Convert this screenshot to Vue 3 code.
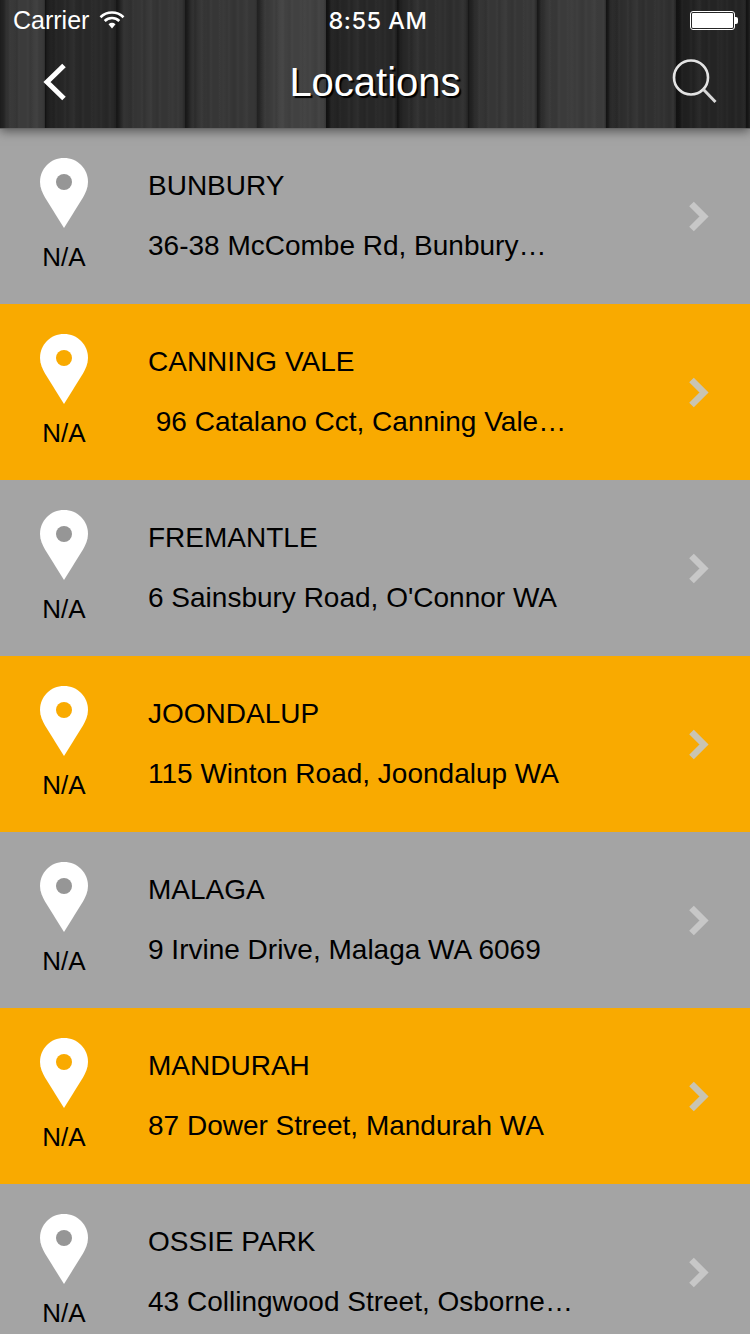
<script setup>
const planks = [
  { w: 45, c: '#3b3b3b', o: 3 }, { w: 71, c: '#282828', o: 11 }, { w: 69, c: '#353535', o: 5 }, { w: 72, c: '#363636', o: 23 },
  { w: 69, c: '#414141', o: 14 }, { w: 71, c: '#272727', o: 8 }, { w: 71, c: '#2e2e2e', o: 19 }, { w: 69, c: '#363636', o: 2 },
  { w: 69, c: '#3b3b3b', o: 27 }, { w: 70, c: '#303030', o: 9 }, { w: 70, c: '#242424', o: 16 }, { w: 4, c: '#2c2c2c', o: 0 },
]
const rows = [
  { name: 'BUNBURY', addr: '36-38 McCombe Rd, Bunbury…' },
  { name: 'CANNING VALE', addr: '\u00a096 Catalano Cct, Canning Vale…' },
  { name: 'FREMANTLE', addr: "6 Sainsbury Road, O'Connor WA" },
  { name: 'JOONDALUP', addr: '115 Winton Road, Joondalup WA' },
  { name: 'MALAGA', addr: '9 Irvine Drive, Malaga WA 6069' },
  { name: 'MANDURAH', addr: '87 Dower Street, Mandurah WA' },
  { name: 'OSSIE PARK', addr: '43 Collingwood Street, Osborne…' },
]
</script>

<template>
  <div class="page">
    <header class="header">
      <div class="wood">
        <div v-for="(p, i) in planks" :key="i" class="plank" :style="{ width: p.w + 'px', backgroundColor: p.c }">
          <div class="grain" :style="{ marginLeft: -p.o + 'px' }"></div>
        </div>
      </div>
      <div class="status">
        <div class="status-left">
          <span>Carrier</span>
          <svg width="26" height="20" viewBox="0 0 26 20">
            <path d="M1.5 7.2 A16.5 16.5 0 0 1 24.5 7.2" fill="none" stroke="#fff" stroke-width="2.6"/>
            <path d="M5.7 11 A10.5 10.5 0 0 1 20.3 11" fill="none" stroke="#fff" stroke-width="2.6"/>
            <path d="M9.5 14.2 A5.6 5.6 0 0 1 16.5 14.2 L13 18.5 Z" fill="#fff"/>
          </svg>
        </div>
        <div class="status-time">8:55 AM</div>
        <div class="battery">
          <div class="battery-body"><div class="battery-fill"></div></div>
          <div class="battery-tip"></div>
        </div>
      </div>
      <div class="nav">
        <svg class="back" width="28" height="40" viewBox="0 0 28 40">
          <path d="M24 3.5 L7 20 L24 36.5" fill="none" stroke="#fff" stroke-width="5"/>
        </svg>
        <div class="title">Locations</div>
        <svg class="search" width="46" height="46" viewBox="0 0 46 46">
          <circle cx="19" cy="18.5" r="17" fill="none" stroke="#e4e4e4" stroke-width="2.6"/>
          <path d="M31 30 L43.5 43" fill="none" stroke="#d8d8d8" stroke-width="3"/>
        </svg>
      </div>
    </header>
    <main class="list">
      <div v-for="(r, i) in rows" :key="r.name" class="row" :class="{ alt: i % 2 === 1 }">
        <div class="pin-col">
          <svg class="pin" width="48" height="70" viewBox="0 0 48 70">
            <path fill-rule="evenodd" d="M24 0 C37.5 0 48 10.5 48 24 C48 30 45.5 35 43 39.5 L24 70 L5 39.5 C2.5 35 0 30 0 24 C0 10.5 10.5 0 24 0 Z" fill="#fff"/>
            <circle class="dot" cx="24" cy="24" r="8"/>
          </svg>
          <div class="na">N/A</div>
        </div>
        <div class="info">
          <div class="name">{{ r.name }}</div>
          <div class="addr">{{ r.addr }}</div>
        </div>
        <svg class="chev" width="22" height="32" viewBox="0 0 22 32">
          <path d="M3.5 3 L16 15.5 L3.5 28" fill="none" stroke-width="6.5"/>
        </svg>
      </div>
    </main>
  </div>
</template>

<style>
html, body { margin: 0; padding: 0; background: #a4a4a4; }
</style>

<style scoped>
.page {
  width: 750px;
  height: 1334px;
  overflow: hidden;
  font-family: "Liberation Sans", Arial, sans-serif;
  display: flex;
  flex-direction: column;
}
.header {
  position: relative;
  z-index: 2;
  height: 128px;
  flex: none;
  box-shadow: 0 3px 10px rgba(0, 0, 0, 0.5);
  color: #fff;
}
.wood {
  position: absolute;
  inset: 0 0 -1px;
  display: flex;
  overflow: hidden;
  border-bottom: 1px solid #666;
  box-sizing: border-box;
}
.plank {
  position: relative;
  height: 100%;
  flex: none;
  overflow: hidden;
  background-image:
    linear-gradient(90deg, rgba(0,0,0,0.6) 0, rgba(0,0,0,0.5) 2px, rgba(0,0,0,0.18) 6px, rgba(0,0,0,0) 22px, rgba(0,0,0,0) 96%, rgba(0,0,0,0.25) 100%);
}
.grain {
  position: absolute;
  top: 0;
  bottom: 0;
  left: 0;
  width: 110px;
  background-image:
    repeating-linear-gradient(90deg, rgba(255,255,255,0) 0 2px, rgba(255,255,255,0.025) 4px, rgba(255,255,255,0) 6px 9px),
    repeating-linear-gradient(90deg, rgba(0,0,0,0) 0 5px, rgba(0,0,0,0.05) 7px, rgba(0,0,0,0) 10px 13px),
    repeating-linear-gradient(90deg, rgba(255,255,255,0) 0 11px, rgba(255,255,255,0.025) 15px, rgba(255,255,255,0) 19px 23px);
}
.status {
  position: relative;
  height: 40px;
  display: grid;
  grid-template-columns: 1fr auto 1fr;
  align-items: center;
  padding: 0 13px;
  font-size: 25px;
}
.status-left {
  display: flex;
  align-items: center;
  gap: 10px;
}
.status-time {
  font-family: Inter, "Liberation Sans", sans-serif;
  font-size: 23.5px;
  font-weight: 500;
  letter-spacing: 0.5px;
  transform: translateX(3px);
}
.battery {
  justify-self: end;
  display: flex;
  align-items: center;
  margin-right: -1px;
  padding-top: 1px;
}
.battery-body {
  width: 45px;
  height: 19px;
  box-sizing: border-box;
  border: 1px solid #fff;
  border-radius: 3px;
  padding: 1px;
}
.battery-fill {
  height: 100%;
  background: #fff;
  border-radius: 1px;
}
.battery-tip {
  width: 3px;
  height: 7px;
  background: #fff;
  border-radius: 0 2px 2px 0;
}
.nav {
  position: relative;
  height: 88px;
  display: flex;
  align-items: center;
  justify-content: center;
}
.title {
  font-size: 40px;
  text-shadow: 2px 2px 1px #000;
  margin-top: -4px;
}
.back {
  position: absolute;
  left: 40px;
  top: 22px;
}
.search {
  position: absolute;
  left: 672px;
  top: 19px;
}
.list {
  flex: 1;
  overflow: hidden;
}
.row {
  height: 176px;
  background: #a4a4a4;
  display: flex;
  align-items: flex-start;
}
.row.alt {
  background: #f9aa00;
}
.dot { fill: #969696; }
.alt .dot { fill: #f9aa00; }
.pin-col {
  width: 128px;
  flex: none;
  display: flex;
  flex-direction: column;
  align-items: center;
  padding-top: 30px;
}
.pin { display: block; }
.na {
  font-size: 26px;
  line-height: 30px;
  margin-top: 14px;
  color: #000;
}
.info {
  margin-left: 20px;
  padding-top: 42px;
  flex: 1;
  color: #000;
  font-size: 28px;
}
.name { line-height: 32px; }
.addr { line-height: 32px; margin-top: 28px; white-space: pre; }
.chev {
  flex: none;
  margin: 73px 40px 0 0;
  stroke: #c7c7c7;
}
.alt .chev { stroke: #c9c4b2; }
</style>
